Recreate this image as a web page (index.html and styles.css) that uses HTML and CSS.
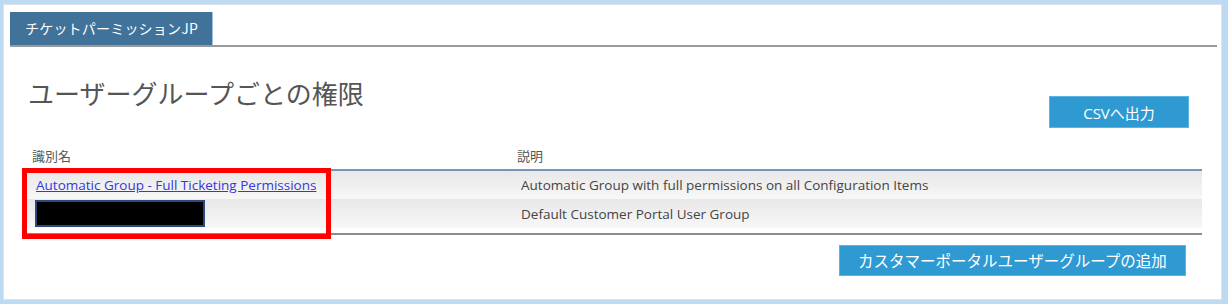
FILE: index.html
```html
<!DOCTYPE html>
<html lang="ja">
<head>
    <meta charset="UTF-8">
    <title>チケットパーミッションJP</title>
    <link rel="stylesheet" href="styles.css">
</head>
<body>
    <div class="panel">
        <div class="tabs">
            <div class="tab">チケットパーミッションJP</div>
        </div>

        <div class="content">
            <div class="title-row">
                <h1>ユーザーグループごとの権限</h1>
                <button class="btn btn-csv">CSVへ出力</button>
            </div>

            <div class="table-wrap">
                <table class="groups">
                    <thead>
                        <tr>
                            <th class="col-name">識別名</th>
                            <th>説明</th>
                        </tr>
                    </thead>
                    <tbody>
                        <tr>
                            <td><a href="#">Automatic Group - Full Ticketing Permissions</a></td>
                            <td>Automatic Group with full permissions on all Configuration Items</td>
                        </tr>
                        <tr>
                            <td><span class="redacted"></span></td>
                            <td>Default Customer Portal User Group</td>
                        </tr>
                    </tbody>
                </table>
                <!-- annotation box drawn over the first column -->
                <div class="highlight"></div>
            </div>

            <div class="actions">
                <button class="btn btn-add">カスタマーポータルユーザーグループの追加</button>
            </div>
        </div>
    </div>
</body>
</html>
```

FILE: styles.css
```css
html, body {
    height: 100%;
}

body {
    margin: 0;
    background-color: #bcdbf2;
    font-family: "Open Sans", "Noto Sans CJK JP", sans-serif;
    color: #444;
}

.panel {
    box-sizing: border-box;
    height: 296px;
    margin: 4px 6px 0 3px;
    background: #fff;
    border: 1px solid #dde3e8;
}

.tabs {
    margin: 7px 4px 0 6px;
    border-bottom: 2px solid #9a9a9a;
    display: flex;
}

.tab {
    height: 33px;
    width: 203px;
    box-sizing: border-box;
    padding-left: 15px;
    line-height: 33px;
    font-size: 14px;
    letter-spacing: 0.2px;
    color: #fff;
    background-color: #41729a;
    border-right: 1px solid #9fc2dc;
    font-family: "Noto Sans CJK JP", sans-serif;
}

.content {
    padding: 0 19px 0 20px;
}

.title-row {
    display: flex;
    justify-content: space-between;
    align-items: flex-start;
}

h1 {
    margin: 30px 0 0 4px;
    font-size: 26px;
    line-height: 32px;
    font-weight: normal;
    color: #555;
    font-family: "Noto Sans CJK JP", sans-serif;
}

.btn {
    border: 1px solid #5db3e2;
    background-color: #2f9ad2;
    color: #fff;
    font-family: "Open Sans", "Noto Sans CJK JP", sans-serif;
    padding: 0;
    cursor: pointer;
}

.btn-csv {
    margin: 49px 13px 0 0;
    width: 140px;
    height: 32px;
    font-size: 15px;
}

.table-wrap {
    position: relative;
    margin-top: 18px;
    padding-bottom: 5px;
    border-bottom: 2px solid #8c8c8c;
}

.groups {
    width: 100%;
    border-collapse: collapse;
    font-size: 13.5px;
}

.groups th {
    text-align: left;
    font-weight: normal;
    font-size: 13px;
    color: #555;
    line-height: 17px;
    padding: 2px 8px 4px;
    border-bottom: 2px solid #7893b3;
}

.groups .col-name {
    width: 469px;
}

.groups td {
    height: 29px;
    padding: 0 12px;
    box-sizing: border-box;
    background: linear-gradient(#e8e8e8, #f7f7f7);
    color: #444;
}

.groups a {
    color: #3636dc;
}

.redacted {
    display: inline-block;
    vertical-align: middle;
    margin-left: -1px;
    width: 170px;
    height: 27px;
    box-sizing: border-box;
    background: #000;
    border: 2px solid #2c4a7c;
}

.highlight {
    position: absolute;
    left: -2px;
    top: 22px;
    width: 309px;
    height: 71px;
    box-sizing: border-box;
    border: 5px solid #f00;
}

.actions {
    display: flex;
    justify-content: flex-end;
    padding-top: 10px;
}

.btn-add {
    margin-right: 16px;
    width: 347px;
    height: 31px;
    font-size: 15.5px;
}
```
